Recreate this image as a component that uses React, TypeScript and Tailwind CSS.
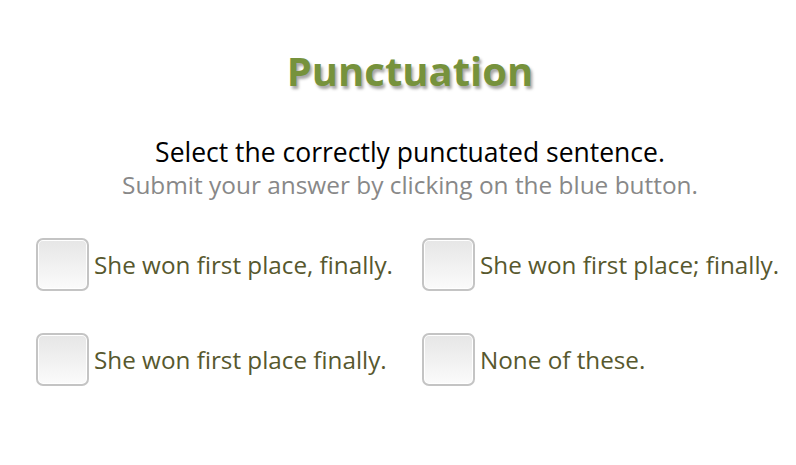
import React from "react";

const Box = () => (
  <div className="w-[53px] h-[53px] shrink-0 rounded-[7px] border-2 border-[#c4c4c4] bg-gradient-to-b from-[#e6e6e6] to-[#fbfbfb] shadow-[inset_0_0_0_1px_#ffffff]" />
);

const Option = ({ text }: { text: string }) => (
  <div className="flex items-center gap-[5px]">
    <Box />
    <span className="text-[24.25px] text-[#57582e] leading-none pt-[2px]">{text}</span>
  </div>
);

export default function App() {
  return (
    <div
      className="w-[796px] h-[465px] bg-white flex flex-col"
      style={{ fontFamily: '"Open Sans", sans-serif' }}
    >
      <div className="pl-[24px] flex flex-col">
        <h1 className="mt-[47px] text-center text-[40px] font-bold text-[#76923c] leading-[48px] [text-shadow:2px_3px_3px_rgba(0,0,0,0.35)]">
          Punctuation
        </h1>
        <p className="mt-[41px] text-center text-[26.5px] text-black leading-[32px]">
          Select the correctly punctuated sentence.
        </p>
        <p className="text-center text-[24.4px] text-[#888888] leading-[34px]">
          Submit your answer by clicking on the blue button.
        </p>
      </div>
      <div className="mt-[36px] pl-[36px] flex flex-col gap-[42px]">
        <div className="flex">
          <div className="w-[386px]"><Option text="She won first place, finally." /></div>
          <Option text="She won first place; finally." />
        </div>
        <div className="flex">
          <div className="w-[386px]"><Option text="She won first place finally." /></div>
          <Option text="None of these." />
        </div>
      </div>
    </div>
  );
}
